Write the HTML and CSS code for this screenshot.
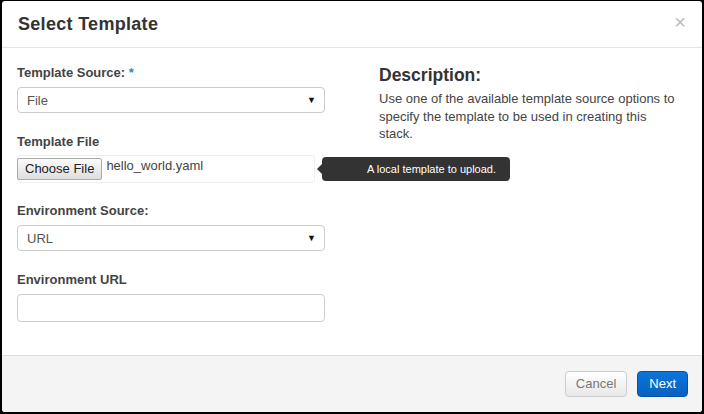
FILE: index.html
```html
<!DOCTYPE html>
<html>
<head>
<meta charset="utf-8">
<link rel="stylesheet" href="styles.css">
</head>
<body>
<div class="modal">
  <div class="modal-header">
    <h3 class="title">Select Template</h3>
    <span class="close">&#215;</span>
  </div>
  <div class="modal-body">
    <div class="left">
      <div class="group">
        <label class="lbl">Template Source: <span class="req">*</span></label>
        <div class="select"><span>File</span><span class="caret">&#9660;</span></div>
      </div>
      <div class="group">
        <label class="lbl">Template File</label>
        <div class="file-row">
          <div class="file">
            <span class="choose">Choose File</span>
            <span class="fname">hello_world.yaml</span>
          </div>
          <div class="tooltip">A local template to upload.</div>
        </div>
      </div>
      <div class="group">
        <label class="lbl">Environment Source:</label>
        <div class="select"><span>URL</span><span class="caret">&#9660;</span></div>
      </div>
      <div class="group">
        <label class="lbl">Environment URL</label>
        <div class="input"></div>
      </div>
    </div>
    <div class="right">
      <h3 class="desc-title">Description:</h3>
      <p class="desc">Use one of the available template source options to specify the template to be used in creating this stack.</p>
    </div>
  </div>
  <div class="modal-footer">
    <span class="btn cancel">Cancel</span>
    <span class="btn next">Next</span>
  </div>
</div>
</body>
</html>
```
FILE: styles.css
```css
* {
  box-sizing: border-box;
}
html, body {
  margin: 0;
  padding: 0;
  background: #000;
}
body {
  padding: 1px 2px 2px 2px;
  font-family: "Liberation Sans", Arial, sans-serif;
  color: #333;
}
.modal {
  background: #fff;
  height: 411px;
  border-radius: 3px;
  display: flex;
  flex-direction: column;
  overflow: hidden;
}
.modal-header {
  height: 47px;
  flex: none;
  border-bottom: 1px solid #e5e5e5;
  display: flex;
  align-items: center;
  justify-content: space-between;
  padding: 0 16px;
}
.title {
  margin: 0;
  font-size: 18px;
  font-weight: bold;
  color: #333;
  letter-spacing: 0.3px;
}
.close {
  color: #bbb;
  font-size: 20px;
  line-height: 1;
  margin-top: -4px;
  margin-right: 0;
}
.modal-body {
  flex: 1;
  display: flex;
  padding: 16px 15px 0 15px;
}
.left {
  width: 308px;
  flex: none;
}
.right {
  margin-left: 54px;
  width: 298px;
}
.group {
  height: 69px;
}
.lbl {
  display: block;
  font-size: 13px;
  font-weight: bold;
  color: #444;
  letter-spacing: 0;
  margin-bottom: 5px;
  line-height: 18px;
}
.req {
  color: #2a8ac6;
}
.select {
  height: 26px;
  border: 1px solid #ccc;
  border-radius: 4px;
  display: flex;
  align-items: center;
  justify-content: space-between;
  padding: 0 8px 0 9px;
  font-size: 13px;
  color: #555;
}
.caret {
  font-size: 9px;
  color: #111;
}
.file-row {
  position: relative;
  margin-top: -1px;
}
.file {
  width: 298px;
  height: 28px;
  border: 1px solid #eee;
  border-radius: 3px;
  display: flex;
  align-items: flex-start;
  padding-top: 2px;
}
.choose {
  display: inline-block;
  white-space: nowrap;
  height: 22px;
  line-height: 20px;
  padding: 0 7px;
  border: 1px solid #aaa;
  border-radius: 2px;
  background: linear-gradient(#fbfbfb, #dedede);
  font-size: 13px;
  color: #222;
  margin-left: -1px;
}
.fname {
  font-size: 13px;
  color: #444;
  margin-left: 4px;
  line-height: 16px;
  white-space: nowrap;
}
.tooltip {
  position: absolute;
  left: 305px;
  top: 2px;
  width: 188px;
  height: 24px;
  line-height: 24px;
  background: #333;
  color: #fff;
  border-radius: 4px;
  font-size: 11px;
  padding-left: 45px;
  white-space: nowrap;
}
.tooltip::before {
  content: "";
  position: absolute;
  left: -5px;
  top: 7px;
  border-top: 5px solid transparent;
  border-bottom: 5px solid transparent;
  border-right: 5px solid #333;
}
.input {
  height: 28px;
  border: 1px solid #ccc;
  border-radius: 4px;
}
.desc-title {
  margin: 1px 0 4px 0;
  font-size: 17.5px;
  font-weight: bold;
  color: #333;
}
.desc {
  margin: 0;
  font-size: 13px;
  line-height: 17.5px;
  color: #444;
}
.modal-footer {
  height: 57px;
  flex: none;
  border-top: 1px solid #ddd;
  background: #f4f4f4;
  display: flex;
  justify-content: flex-end;
  align-items: flex-start;
  padding: 15px 14px 0 0;
  gap: 10px;
}
.btn {
  display: inline-block;
  height: 26px;
  line-height: 24px;
  border-radius: 4px;
  font-size: 13px;
  padding: 0 10px;
}
.cancel {
  border: 1px solid #ccc;
  background: linear-gradient(#fff, #e8e8e8);
  color: #777;
}
.next {
  border: 1px solid #0850a8;
  background: linear-gradient(#0b74db, #0861c0);
  color: #fff;
  padding: 0 11px;
}
```
